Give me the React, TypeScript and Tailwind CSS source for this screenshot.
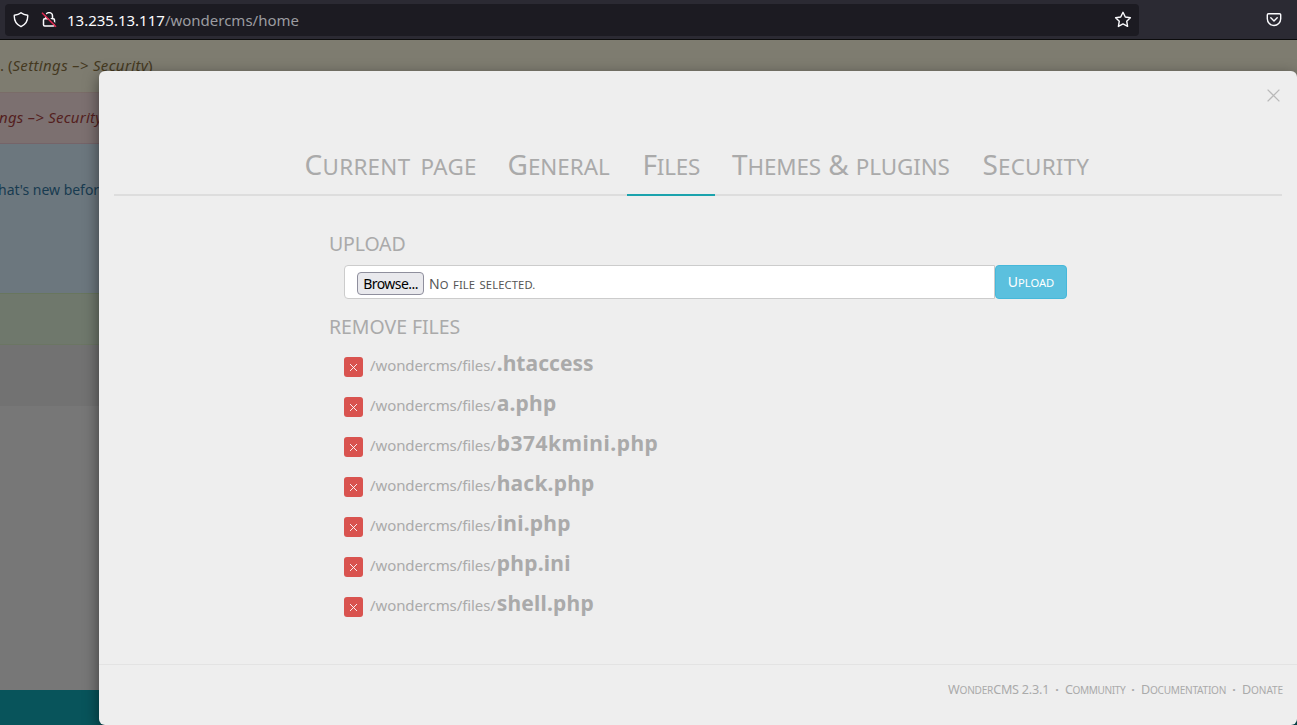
import { Fragment } from 'react';

/** Renders text as small capitals: runs of lower-case letters are shrunk and shown upper-case. */
function SmallCaps({ text }: { text: string }) {
  const runs = text.match(/[a-z]+(?: [a-z]+)*\.?|[^a-z]+/g) ?? [];
  return (
    <>
      {runs.map((run, i) =>
        /^[a-z]/.test(run) ? (
          <span key={i} className="text-[0.8em] uppercase">
            {run}
          </span>
        ) : (
          <Fragment key={i}>{run}</Fragment>
        ),
      )}
    </>
  );
}

const tabs = [
  { label: 'Current page', cls: 'w-[203px] tracking-[0.3px] [word-spacing:4px]' },
  { label: 'General', cls: 'w-[135px]' },
  { label: 'Files', cls: 'w-[88px] tracking-[-0.2px]', active: true },
  { label: 'Themes & plugins', cls: 'w-[252px] pl-[17px] tracking-[-0.1px]' },
  { label: 'Security', cls: 'w-[137px] tracking-[0.2px]' },
];

const files = [
  { name: '.htaccess', cls: 'tracking-[0.05px]' },
  { name: 'a.php', cls: 'tracking-[0.2px]' },
  { name: 'b374kmini.php', cls: 'tracking-[0.5px]' },
  { name: 'hack.php', cls: 'tracking-[0.2px]' },
  { name: 'ini.php', cls: 'tracking-[0.25px]' },
  { name: 'php.ini', cls: 'tracking-[0.25px]' },
  { name: 'shell.php', cls: 'tracking-[0.2px]' },
];

const links = [
  { label: 'WonderCMS 2.3.1', cls: 'w-[101px] tracking-[-0.22px]' },
  { label: 'Community', cls: 'w-[60px] tracking-[-0.4px]' },
  { label: 'Documentation', cls: 'w-[85px] tracking-[-0.25px]' },
  { label: 'Donate', cls: 'w-[41px] tracking-[-0.1px]' },
];

function BrowserBar() {
  return (
    <header className="flex h-10 shrink-0 items-center justify-between border-b border-[#0c0c0d] bg-[#2b2a33] pr-[15px] pl-[5px]">
      <div className="flex h-8 w-[1134px] items-center rounded bg-[#1c1b22] pr-[7px] pl-2">
        <svg className="size-4" viewBox="0 0 16 16" fill="none" stroke="#fbfbfe" strokeWidth="1.4" strokeLinejoin="round">
          <path d="M8 0.700 C6.300 2.200 4 3 1.300 3.300 C1 8.500 2.800 12.400 8 14.700 C13.200 12.400 15 8.500 14.700 3.300 C12 3 9.700 2.200 8 0.700Z" />
        </svg>
        <svg className="ml-3 h-4 w-4" viewBox="0 0 16 16" fill="none">
          <path d="M4.700 6.500V4a3.400 3.400 0 0 1 6.800 0V6.500" stroke="#fbfbfe" strokeWidth="1.5" />
          <rect x="2.500" y="6.700" width="11" height="7.300" rx="1.200" stroke="#fbfbfe" strokeWidth="1.500" />
          <path d="M2.600 0.600 15.500 13.500" stroke="#1c1b22" strokeWidth="1.600" />
          <path d="M1 .8 15 14.800" stroke="#e22850" strokeWidth="1.500" />
        </svg>
        <p className="ml-[10px] text-[15px] leading-8 whitespace-pre text-[#9b9ba0]">
          <span className="text-[#fbfbfe]">13.235.13.117</span>/wondercms/home
        </p>
        <svg className="ml-auto size-[18px]" viewBox="0 0 18 18" fill="none" stroke="#fbfbfe" strokeWidth="1.4" strokeLinejoin="round">
          <path d="M9 1.300 11.300 6 16.400 6.700 12.700 10.200 13.600 15.400 9 12.900 4.400 15.400 5.300 10.200 1.600 6.700 6.700 6Z" />
        </svg>
      </div>
      <svg className="size-4" viewBox="0 0 16 16" fill="none" stroke="#fbfbfe" strokeWidth="1.4" strokeLinecap="round" strokeLinejoin="round">
        <path d="M2.500 1.700h11a1.200 1.200 0 0 1 1.200 1.200V6.800a6.700 6.700 0 0 1-13.400 0V2.900a1.200 1.200 0 0 1 1.200-1.200Z" />
        <path d="m4.800 5.800 3.200 3.200 3.200-3.200" />
      </svg>
    </header>
  );
}

function PageBehind() {
  return (
    <div className="flex h-full flex-col bg-[#777] text-[15px] whitespace-pre">
      <div className="h-[52px] shrink-0 bg-[#7e7c70] leading-[51px] text-[#45391f]">
        . (<i className="tracking-[0.35px]">Settings –&gt; Security</i>)
      </div>
      <div className="h-[52px] shrink-0 border-y border-t-[#7a6c68] border-b-[#756469] bg-[#7c7070] leading-[49px] text-[#541f20]">
        <i className="ml-[-1px] tracking-[0.25px]">ngs –&gt; Security</i>
      </div>
      <div className="h-[149px] shrink-0 bg-[#6c777e] pt-[35px] text-[14px] text-[#183b50]">
        <p className="ml-[-2px] leading-[21px] tracking-[-0.02px]">hat's new befor</p>
      </div>
      <div className="h-[52px] shrink-0 border-y border-t-[#68765e] border-b-[#6b7663] bg-[#6f786c]" />
      <div className="h-[61px] shrink-0 bg-[#727272]" />
      <div className="h-[284px] shrink-0" />
      <div className="flex-1 bg-[#08545b]" />
    </div>
  );
}

function SettingsModal() {
  return (
    <section className="absolute top-[31px] right-0 bottom-0 left-[99px] flex flex-col rounded-md bg-[#eee] text-[#aaa] shadow-[0_5px_15px_rgba(0,0,0,0.5)]">
      <div className="flex h-[65px] shrink-0 justify-end pt-[18px] pr-[17px]">
        <button aria-label="Close" className="size-[13px]">
          <svg className="size-[13px]" viewBox="0 0 13 13" stroke="#b9b9b9" strokeWidth="1.3">
            <path d="m.6.6 11.8 11.8M12.400.600.600 12.400" />
          </svg>
        </button>
      </div>

      <nav className="mx-[15px] flex h-[60px] shrink-0 border-b-2 border-[#ddd] pl-[175px] text-[28px] whitespace-pre">
        {tabs.map((t) => (
          <button
            key={t.label}
            className={`-mb-0.5 h-[60px] shrink-0 border-b-2 pl-[15.5px] text-left leading-[57px] ${t.cls} ${t.active ? 'border-[#1ba3ad]' : 'border-transparent'}`}
          >
            <SmallCaps text={t.label} />
          </button>
        ))}
      </nav>

      <div className="flex h-[468px] shrink-0 flex-col pl-[230px]">
        <h2 className="mt-[33px] h-[30px] text-[19.5px] leading-[29px] tracking-[-0.15px]">UPLOAD</h2>
        <div className="mt-[6px] ml-[15px] flex h-[34px] w-[723px]">
          <div className="flex flex-1 items-center rounded-l border border-[#ccc] bg-white pl-3">
            <button className="mt-[3px] mb-px h-[23px] w-[67px] rounded border border-[#8f8f9d] bg-[#e9e9ed] text-[14px] leading-[21px] tracking-[-0.55px] text-black">
              Browse...
            </button>
            <span className="mt-[3px] mb-px ml-[5px] text-[14px] tracking-[0.15px] whitespace-pre text-[#555] [word-spacing:1.2px]">
              <SmallCaps text="No file selected." />
            </span>
          </div>
          <button className="w-[72px] rounded border border-[#46b8da] bg-[#5bc0de] pb-0.5 text-[14px] text-white">
            <SmallCaps text="Upload" />
          </button>
        </div>
        <h2 className="mt-[13px] h-[30px] text-[19.5px] leading-[29px] tracking-[-0.05px]">REMOVE FILES</h2>
        <ul className="mt-px ml-[15px]">
          {files.map((f) => (
            <li key={f.name} className="flex h-10">
              <button aria-label={`Delete ${f.name}`} className="mt-[14px] flex h-5 w-[19px] items-center justify-center rounded-[3px] bg-[#d9534f]">
                <svg className="size-[7px]" viewBox="0 0 7 7" stroke="#fff" strokeWidth="0.9">
                  <path d="m0 0 7 7M7 0 0 7" />
                </svg>
              </button>
              <p className="ml-[7px] text-[15px] leading-10 tracking-[-0.1px] whitespace-pre">
                /wondercms/files/
                <b className={`ml-px text-[21px] ${f.cls}`}>{f.name}</b>
              </p>
            </li>
          ))}
        </ul>
      </div>

      <footer className="flex flex-1 items-start justify-end border-t border-[#e3e3e3] pt-[14px] pr-[14px] text-[12.6px] leading-[22px] whitespace-pre">
        {links.map((l, i) => (
          <Fragment key={l.label}>
            {i > 0 && <span className="w-4 text-center font-bold">·</span>}
            <a className={l.cls}>
              <SmallCaps text={l.label} />
            </a>
          </Fragment>
        ))}
      </footer>
    </section>
  );
}

export default function App() {
  return (
    <div className="flex h-[725px] w-[1297px] flex-col overflow-hidden font-['Noto_Sans',sans-serif]">
      <BrowserBar />
      <main className="relative flex-1 overflow-hidden">
        <PageBehind />
        <SettingsModal />
      </main>
    </div>
  );
}
